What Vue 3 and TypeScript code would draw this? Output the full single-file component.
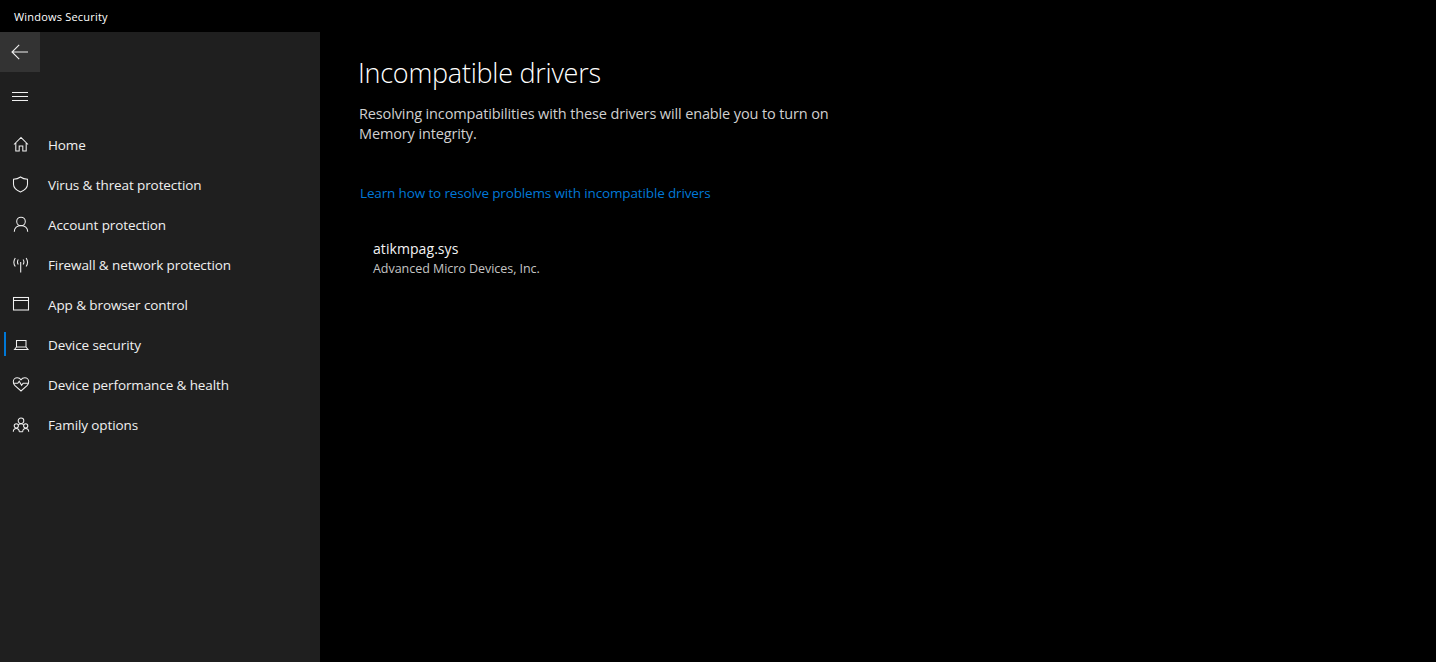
<script setup lang="ts">
const items = [
  { label: 'Home', icon: 'home' },
  { label: 'Virus & threat protection', icon: 'shield' },
  { label: 'Account protection', icon: 'person' },
  { label: 'Firewall & network protection', icon: 'antenna' },
  { label: 'App & browser control', icon: 'window' },
  { label: 'Device security', icon: 'laptop', active: true },
  { label: 'Device performance & health', icon: 'heart' },
  { label: 'Family options', icon: 'family' },
]
</script>

<template>
  <div class="app">
    <header class="titlebar">Windows Security</header>
    <div class="body">
      <aside class="sidebar">
        <button class="back" aria-label="Back">
          <svg width="18" height="16" viewBox="0 0 18 16" fill="none" stroke="#f0f0f0" stroke-width="1.1">
            <path d="M17 8H1M8.2 .8 1 8l7.2 7.2" />
          </svg>
        </button>
        <button class="burger" aria-label="Menu">
          <svg width="16" height="10" viewBox="0 0 16 10" stroke="#f0f0f0" stroke-width="1">
            <path d="M0 .5h16M0 4.500h16M0 8.500h16" />
          </svg>
        </button>
        <nav class="nav">
          <a v-for="item in items" :key="item.label" class="item" :class="{ active: item.active }">
            <span class="marker"></span>
            <svg class="icon" width="18" height="18" viewBox="0 0 18 18" fill="none" stroke="#f0f0f0" stroke-width="1.05">
              <path v-if="item.icon === 'home'" d="M2 8.500 9 1.500l7 7M3.800 6.800v8.200h3.400v-5h3.600v5h3.400V6.800" />
              <path v-else-if="item.icon === 'shield'" d="M8.500 1C10.500 2.500 13 3.200 15.500 3.200v5C15.500 12 12.500 14.300 8.500 16 4.500 14.300 1.500 12 1.500 8.200v-5C4 3.200 6.500 2.500 8.500 1Z" />
              <g v-else-if="item.icon === 'person'">
                <circle cx="9" cy="5.500" r="4.300" />
                <path d="M2.300 15.700c0-3.700 2.900-6.200 6.700-6.200s6.700 2.500 6.700 6.200" />
              </g>
              <g v-else-if="item.icon === 'antenna'">
                <path d="M8.700 6v10.500M6.300 3.500c-1 1.500-1 3.500 0 5M11.100 3.500c1 1.500 1 3.500 0 5M3.300 2c-1.800 2.700-1.800 6 0 8.500M14.100 2c1.800 2.700 1.800 6 0 8.500" />
              </g>
              <g v-else-if="item.icon === 'window'">
                <rect x="1.500" y="1.500" width="15" height="12.500" />
                <path d="M1.500 4.500h15" />
              </g>
              <g v-else-if="item.icon === 'laptop'">
                <path d="M4.500 4.500h9.500v6.500H4.500zM2.500 13.500l2-2.500h9.500l2 2.500Z" />
              </g>
              <g v-else-if="item.icon === 'heart'">
                <path d="M3 9.700C1.700 8.300 1.300 7 1.300 5.700c0-2.200 1.800-4 3.900-4 1.600 0 3 .8 3.800 2.100.8-1.300 2.200-2.100 3.800-2.100 2.100 0 3.900 1.800 3.900 4 0 1.300-.4 2.600-1.700 4L9 15Z" />
                <path d="M1.300 7.300h4.500L7.200 5.300l2.400 4 1.500-2h5.600" />
              </g>
              <g v-else>
                <circle cx="9" cy="4.800" r="2.800" />
                <circle cx="4.300" cy="9.800" r="2.100" />
                <circle cx="13.700" cy="9.800" r="2.100" />
                <path d="M1.300 15.700c0-1.800 1.200-3.300 3-3.300s3 1.500 3 3.300M10.700 15.700c0-1.800 1.200-3.300 3-3.300s3 1.500 3 3.300M6.200 9.200c.6-1 1.600-1.500 2.800-1.500s2.200.5 2.800 1.500M7.300 15.700h3.400" />
              </g>
            </svg>
            <span class="label">{{ item.label }}</span>
          </a>
        </nav>
      </aside>
      <main class="main">
        <h1 class="title">Incompatible drivers</h1>
        <p class="intro">Resolving incompatibilities with these drivers will enable you to turn on<br />Memory integrity.</p>
        <a class="link">Learn how to resolve problems with incompatible drivers</a>
        <div class="driver">
          <div class="driver-name">atikmpag.sys</div>
          <div class="driver-vendor">Advanced Micro Devices, Inc.</div>
        </div>
      </main>
    </div>
  </div>
</template>

<style>
html, body { margin: 0; background: #000; }
</style>

<style scoped>
.app {
  width: 1436px;
  height: 662px;
  display: flex;
  flex-direction: column;
  background: #000;
  color: #fff;
  font-family: "Open Sans", "Noto Sans", sans-serif;
  overflow: hidden;
}
.titlebar {
  height: 32px;
  flex: none;
  display: flex;
  align-items: center;
  padding-left: 14px;
  font-size: 11px;
  letter-spacing: 0.2px;
}
.body { flex: 1; display: flex; min-height: 0; }
.sidebar {
  width: 320px;
  flex: none;
  background: #1f1f1f;
  display: flex;
  flex-direction: column;
  align-items: flex-start;
}
.back, .burger {
  width: 40px;
  height: 40px;
  padding: 0;
  border: 0;
  display: flex;
  align-items: center;
  justify-content: center;
}
.back { background: #333; }
.burger { background: transparent; margin: 5px 0 8px; }
.nav { width: 100%; display: flex; flex-direction: column; }
.item {
  height: 40px;
  display: flex;
  align-items: center;
  position: relative;
  color: #f0f0f0;
}
.marker {
  position: absolute;
  left: 4px;
  top: 7px;
  width: 2px;
  height: 24px;
  background: transparent;
}
.active .marker { background: #0078d7; }
.icon { margin-left: 12px; flex: none; }
.label {
  margin-left: 18px;
  font-size: 13.5px;
  letter-spacing: -0.1px;
}
.main { flex: 1; padding: 0 0 0 38px; min-width: 0; }
.title {
  margin: 22px 0 0;
  font-size: 27px;
  line-height: 38px;
  font-weight: 300;
  letter-spacing: -0.25px;
}
.intro {
  margin: 12px 0 0 1px;
  font-size: 14.5px;
  line-height: 20px;
  color: #d0d0d0;
  letter-spacing: -0.13px;
}
.link {
  display: block;
  margin: 39px 0 0 2px;
  font-size: 13.5px;
  line-height: 20px;
  color: #0078d7;
  letter-spacing: -0.14px;
}
.driver { margin: 36px 0 0 15px; }
.driver-name { font-size: 14px; line-height: 20px; letter-spacing: 0.07px; color: #f4f4f4; }
.driver-vendor { font-size: 12.5px; line-height: 20px; color: #c4c4c4; letter-spacing: -0.04px; }
</style>
